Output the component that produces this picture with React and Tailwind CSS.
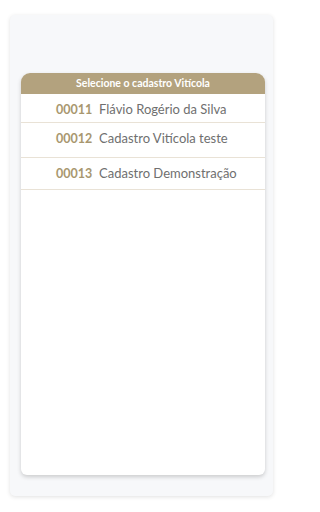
export default function App() {
  const rows = [
    { id: "00011", name: "Flávio Rogério da Silva", cls: "pt-[6px] pb-[3px]" },
    { id: "00012", name: "Cadastro Vitícola teste", cls: "pt-[6px] pb-[9px]" },
    { id: "00013", name: "Cadastro Demonstração", cls: "pt-[6px] pb-[6px]" },
  ];

  return (
    <div className="w-[284px] h-[512px] bg-white pt-[15px] px-[10px] font-['Lato',sans-serif]">
      {/* painel externo */}
      <div className="w-[263px] h-[481px] bg-[#f7f8fa] rounded-[5px] shadow-[0_1px_4px_rgba(0,0,0,0.12)] pt-[58px] px-[11px]">
        <div className="w-[244px] h-[402px] bg-white rounded-t-[9px] rounded-b-[6px] shadow-[0_2px_4px_rgba(0,0,0,0.18)] overflow-hidden">
          <div className="h-[21px] bg-[#b3a27e] text-white text-[10.5px] font-bold flex items-center justify-center">
            Selecione o cadastro Vitícola
          </div>
          {rows.map((r) => (
            <div
              key={r.id}
              className={`flex items-baseline border-b border-[#e9e2d6] pl-[35px] leading-[18px] ${r.cls}`}
            >
              <span className="w-[34px] text-[12.5px] font-bold text-[#a8976f]">{r.id}</span>
              <span className="ml-[9px] text-[13px] text-[#6f6f6f]">{r.name}</span>
            </div>
          ))}
        </div>
      </div>
    </div>
  );
}
